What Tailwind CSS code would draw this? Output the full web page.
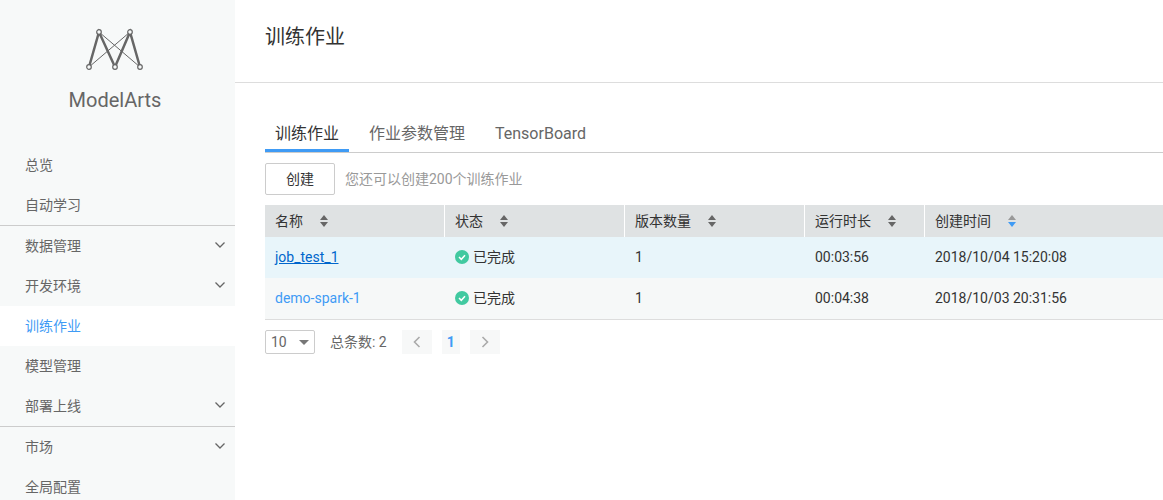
<!DOCTYPE html>
<html lang="zh">
<head>
    <meta charset="utf-8">
    <title>ModelArts</title>
    <script src="https://cdn.jsdelivr.net/npm/@tailwindcss/browser@4"></script>
</head>
<body class="h-[500px] overflow-hidden bg-white font-['Roboto','Noto_Sans_CJK_SC',sans-serif] text-[14px] text-[#333]">
<div class="flex h-[500px]">
    <!-- Sidebar -->
    <aside class="w-[235px] shrink-0 bg-[#f7f9f9] text-[#666]">
        <div class="h-[145px] pr-[5px] flex flex-col items-center">
            <svg class="mt-[28px]" width="60" height="44" viewBox="0 0 60 44" fill="none" stroke="#666">
                <path d="M4 39 L14 4 L30 39 L45 4 L55 39" stroke-width="2.5"/>
                <path d="M14 4 L55 39 M45 4 L4 39" stroke-width="1"/>
                <g fill="#f7f9f9" stroke-width="1.2">
                    <circle cx="14" cy="4" r="2.3"/><circle cx="45" cy="4" r="2.3"/>
                    <circle cx="4" cy="39" r="2.3"/><circle cx="30" cy="39" r="2.3"/><circle cx="55" cy="39" r="2.3"/>
                </g>
            </svg>
            <div class="mt-[12px] text-[20px] leading-[32px] text-[#666]">ModelArts</div>
        </div>
        <nav class="text-[14px]">
            <div class="h-[40px] pl-[25px] flex items-center">总览</div>
            <div class="h-[40px] pl-[25px] flex items-center">自动学习</div>
            <div class="h-[41px] pl-[25px] pr-[9px] flex items-center justify-between border-t border-[#ccc]">数据管理
                <svg class="mb-[2px]" width="12" height="8" viewBox="0 0 12 8" fill="none" stroke="#666" stroke-width="1.3"><path d="M1.5 1.5 L6 6 L10.5 1.5"/></svg>
            </div>
            <div class="h-[40px] pl-[25px] pr-[9px] flex items-center justify-between">开发环境
                <svg class="mb-[2px]" width="12" height="8" viewBox="0 0 12 8" fill="none" stroke="#666" stroke-width="1.3"><path d="M1.5 1.5 L6 6 L10.5 1.5"/></svg>
            </div>
            <div class="h-[40px] pl-[25px] flex items-center bg-white text-[#3f9bf5]">训练作业</div>
            <div class="h-[40px] pl-[25px] flex items-center">模型管理</div>
            <div class="h-[40px] pl-[25px] pr-[9px] flex items-center justify-between">部署上线
                <svg class="mb-[2px]" width="12" height="8" viewBox="0 0 12 8" fill="none" stroke="#666" stroke-width="1.3"><path d="M1.5 1.5 L6 6 L10.5 1.5"/></svg>
            </div>
            <div class="h-[41px] pl-[25px] pr-[9px] flex items-center justify-between border-t border-[#ccc]">市场
                <svg class="mb-[2px]" width="12" height="8" viewBox="0 0 12 8" fill="none" stroke="#666" stroke-width="1.3"><path d="M1.5 1.5 L6 6 L10.5 1.5"/></svg>
            </div>
            <div class="h-[40px] pl-[25px] flex items-center">全局配置</div>
        </nav>
    </aside>

    <!-- Main content -->
    <main class="flex-1 min-w-0">
        <header class="h-[83px] border-b border-[#ddd] pl-[30px] pt-[21px]">
            <h1 class="text-[20px] leading-[32px] text-[#333]">训练作业</h1>
        </header>
        <div class="pl-[30px] pt-[32px]">
            <div class="flex h-[38px] border-b border-[#ccc] text-[16px] text-[#666]">
                <div class="w-[84px] h-[37px] pt-[3px] flex items-center justify-center border-b-[3px] border-[#3f9bf5] text-[#333]">训练作业</div>
                <div class="ml-[20px] h-[37px] flex items-center">作业参数管理</div>
                <div class="ml-[30px] h-[37px] flex items-center">TensorBoard</div>
            </div>
            <div class="flex items-center mt-[10px] h-[32px]">
                <button class="w-[70px] h-[32px] border border-[#ccc] rounded-[2px] bg-white text-[14px] text-[#333]">创建</button>
                <span class="ml-[10px] text-[#999]">您还可以创建200个训练作业</span>
            </div>
            <div class="mt-[10px]">
                <div class="grid grid-cols-[180px_180px_180px_120px_1fr] h-[32px] bg-[#dfe2e3]">
                    <div class="flex items-center pl-[10px] border-r border-white">名称<svg class="ml-[17px]" width="8" height="12" viewBox="0 0 8 12" fill="#666"><path d="M4 0 L8 5 H0Z M0 7 H8 L4 12Z"/></svg></div>
                    <div class="flex items-center pl-[10px] border-r border-white">状态<svg class="ml-[17px]" width="8" height="12" viewBox="0 0 8 12" fill="#666"><path d="M4 0 L8 5 H0Z M0 7 H8 L4 12Z"/></svg></div>
                    <div class="flex items-center pl-[10px] border-r border-white">版本数量<svg class="ml-[17px]" width="8" height="12" viewBox="0 0 8 12" fill="#666"><path d="M4 0 L8 5 H0Z M0 7 H8 L4 12Z"/></svg></div>
                    <div class="flex items-center pl-[10px] border-r border-white">运行时长<svg class="ml-[17px]" width="8" height="12" viewBox="0 0 8 12" fill="#666"><path d="M4 0 L8 5 H0Z M0 7 H8 L4 12Z"/></svg></div>
                    <div class="flex items-center pl-[10px]">创建时间<svg class="ml-[17px]" width="8" height="12" viewBox="0 0 8 12"><path d="M4 0 L8 5 H0Z" fill="#999"/><path d="M0 7 H8 L4 12Z" fill="#3f9bf5"/></svg></div>
                </div>
                <div class="grid grid-cols-[180px_180px_180px_120px_1fr] h-[41px] items-center bg-[#e8f5fa]">
                    <a class="pl-[10px] text-[#0066cc] underline">job_test_1</a>
                    <div class="pl-[10px] flex items-center gap-[4px]"><svg class="mb-[2px]" width="14" height="14" viewBox="0 0 14 14"><circle cx="7" cy="7" r="7" fill="#41c9a0"/><path d="M4 7 L6.3 9.3 L10 5.2" fill="none" stroke="#fff" stroke-width="1.5"/></svg>已完成</div>
                    <div class="pl-[10px]">1</div>
                    <div class="pl-[10px]">00:03:56</div>
                    <div class="pl-[10px]">2018/10/04 15:20:08</div>
                </div>
                <div class="grid grid-cols-[180px_180px_180px_120px_1fr] h-[42px] items-center bg-[#f6f8f8] border-b border-[#ddd]">
                    <a class="pl-[10px] text-[#3f9bf5]">demo-spark-1</a>
                    <div class="pl-[10px] flex items-center gap-[4px]"><svg class="mb-[2px]" width="14" height="14" viewBox="0 0 14 14"><circle cx="7" cy="7" r="7" fill="#41c9a0"/><path d="M4 7 L6.3 9.3 L10 5.2" fill="none" stroke="#fff" stroke-width="1.5"/></svg>已完成</div>
                    <div class="pl-[10px]">1</div>
                    <div class="pl-[10px]">00:04:38</div>
                    <div class="pl-[10px]">2018/10/03 20:31:56</div>
                </div>
            </div>
            <div class="flex items-center mt-[10px] h-[24px] text-[#666]">
                <div class="w-[50px] h-[24px] border border-[#ccc] rounded-[2px] flex items-center justify-between pl-[5px] pr-[5px]">10<svg width="10" height="5" viewBox="0 0 10 5" fill="#777"><path d="M0 0 H10 L5 5Z"/></svg></div>
                <span class="ml-[15px]">总条数: 2</span>
                <div class="ml-[15px] w-[30px] h-[24px] bg-[#f7f8f8] flex items-center justify-center"><svg width="8" height="12" viewBox="0 0 8 12" fill="none" stroke="#aaa" stroke-width="1.6"><path d="M6.5 1 L1.5 6 L6.5 11"/></svg></div>
                <div class="ml-[10px] w-[18px] h-[24px] bg-[#f7f8f8] flex items-center justify-center text-[#3f9bf5] font-bold">1</div>
                <div class="ml-[10px] w-[30px] h-[24px] bg-[#f7f8f8] flex items-center justify-center"><svg width="8" height="12" viewBox="0 0 8 12" fill="none" stroke="#aaa" stroke-width="1.6"><path d="M1.5 1 L6.5 6 L1.5 11"/></svg></div>
            </div>
        </div>
    </main>
</div>
</body>
</html>
